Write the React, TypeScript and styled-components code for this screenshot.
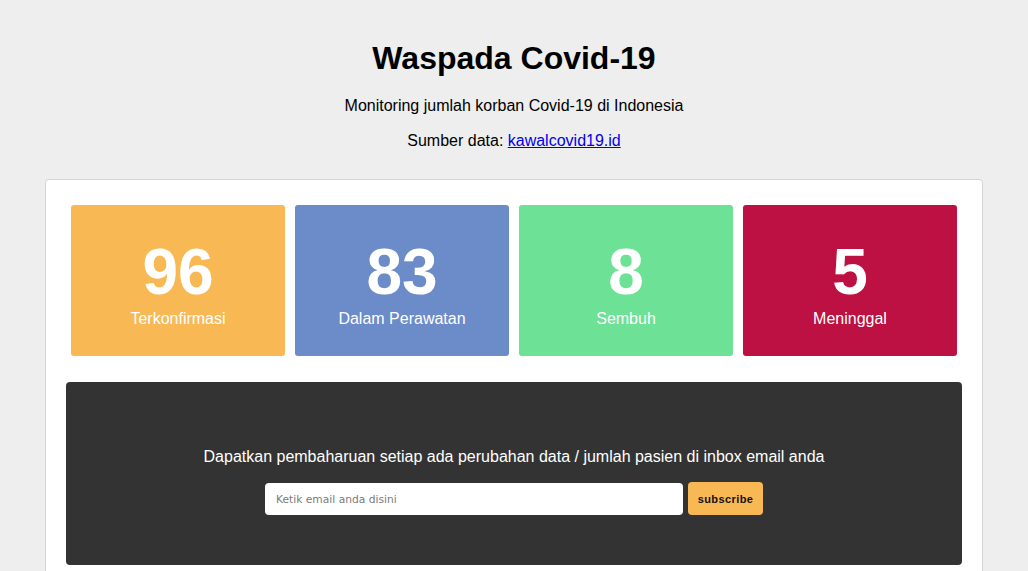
import React from "react";
import styled, { createGlobalStyle } from "styled-components";

const Global = createGlobalStyle`
  html, body { margin: 0; padding: 0; }
  body {
    background: #eeeeee;
    font-family: "Liberation Sans", Arial, Helvetica, sans-serif;
    color: #000;
  }
  * { box-sizing: border-box; }
`;

const Header = styled.header`
  padding-top: 40px;
  text-align: center;
`;

const Title = styled.h1`
  margin: 0 0 20px;
  font-size: 32px;
  line-height: 37px;
  font-weight: 700;
`;

const Lead = styled.p<{ $gap: number }>`
  margin: 0 0 ${(p) => p.$gap}px;
  font-size: 16px;
  line-height: 18px;
`;

const Link = styled.a`
  color: #0000ee;
  text-decoration: underline;
`;

const Panel = styled.main`
  margin: 0 45px;
  background: #ffffff;
  border: 1px solid #d4d4d4;
  border-radius: 4px;
  padding: 20px 20px 40px;
`;

const StatRow = styled.div`
  display: flex;
`;

const StatCard = styled.div<{ $bg: string }>`
  flex: 1 1 0;
  margin: 5px;
  height: 151px;
  padding-top: 35px;
  border-radius: 3px;
  background: ${(p) => p.$bg};
  color: #ffffff;
  display: flex;
  flex-direction: column;
  align-items: center;
`;

const StatNumber = styled.div`
  font-size: 64px;
  line-height: 64px;
  font-weight: 700;
  margin-bottom: 6px;
`;

const StatLabel = styled.div`
  font-size: 16px;
  line-height: 18px;
`;

const Subscribe = styled.section`
  margin-top: 21px;
  background: #333333;
  border-radius: 4px;
  padding: 66px 20px 50px;
  color: #ffffff;
  text-align: center;
`;

const SubscribeText = styled.p`
  margin: 0 0 16px;
  font-size: 16px;
  line-height: 18px;
`;

const Form = styled.form`
  display: flex;
  justify-content: center;
  align-items: flex-end;
  gap: 5px;
`;

const EmailInput = styled.input`
  width: 418px;
  height: 32px;
  border: none;
  border-radius: 4px;
  background: #ffffff;
  padding: 0 11px;
  font-family: "DejaVu Sans", Verdana, sans-serif;
  font-size: 10.7px;
  color: #333;
  outline: none;
  &::placeholder {
    color: #7a7a7a;
  }
`;

const SubscribeButton = styled.button`
  width: 75px;
  height: 33px;
  border: none;
  border-radius: 4px;
  background: #f8b955;
  color: #111111;
  font-family: "Liberation Sans", Arial, sans-serif;
  font-weight: 700;
  font-size: 11px;
  letter-spacing: 0.4px;
  cursor: pointer;
  padding: 0;
`;

const stats = [
  { value: 96, label: "Terkonfirmasi", color: "#f8b955" },
  { value: 83, label: "Dalam Perawatan", color: "#6b8bc9" },
  { value: 8, label: "Sembuh", color: "#6de196" },
  { value: 5, label: "Meninggal", color: "#bc1142" },
];

export default function App() {
  return (
    <>
      <Global />
      <Header>
        <Title>Waspada Covid-19</Title>
        <Lead $gap={17}>Monitoring jumlah korban Covid-19 di Indonesia</Lead>
        <Lead $gap={29}>
          Sumber data: <Link href="#">kawalcovid19.id</Link>
        </Lead>
      </Header>
      <Panel>
        <StatRow>
          {stats.map((s) => (
            <StatCard key={s.label} $bg={s.color}>
              <StatNumber>{s.value}</StatNumber>
              <StatLabel>{s.label}</StatLabel>
            </StatCard>
          ))}
        </StatRow>
        <Subscribe>
          <SubscribeText>
            Dapatkan pembaharuan setiap ada perubahan data / jumlah pasien di inbox email anda
          </SubscribeText>
          <Form onSubmit={(e) => e.preventDefault()}>
            <EmailInput type="email" placeholder="Ketik email anda disini" />
            <SubscribeButton type="submit">subscribe</SubscribeButton>
          </Form>
        </Subscribe>
      </Panel>
    </>
  );
}
